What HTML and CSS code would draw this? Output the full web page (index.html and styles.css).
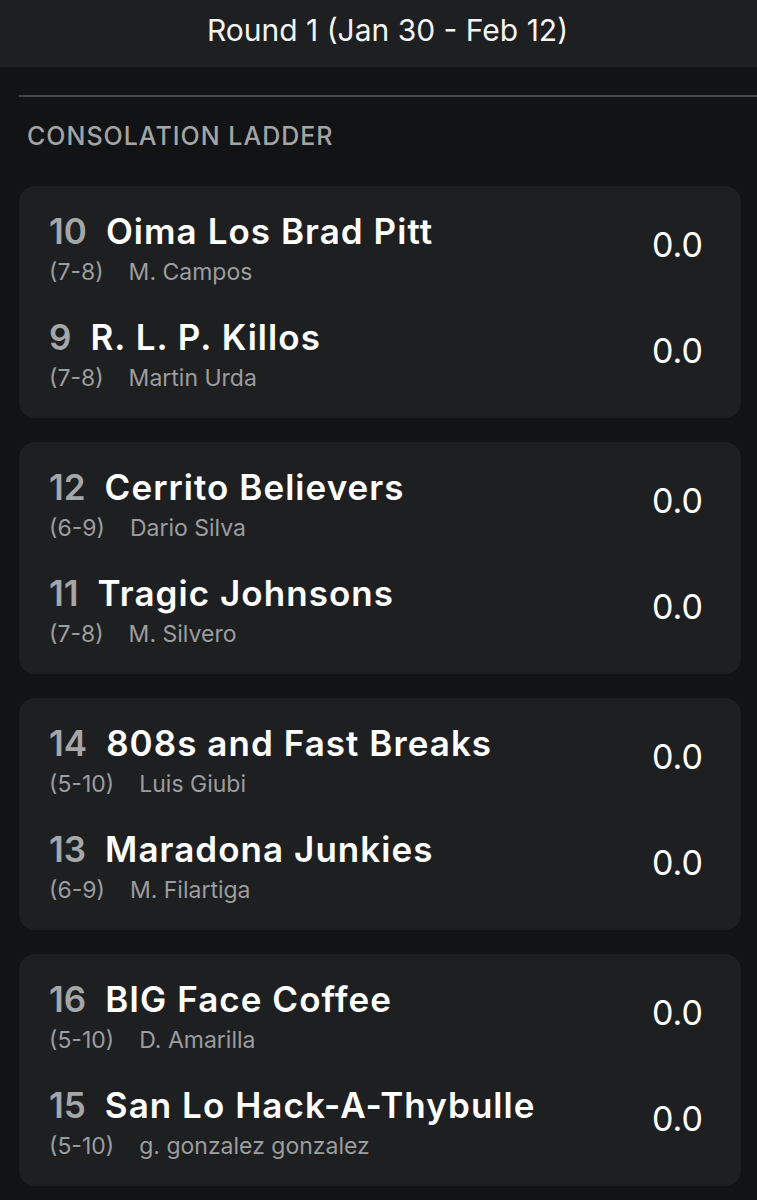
FILE: index.html
```html
<!DOCTYPE html>
<html lang="en">
<head>
  <meta charset="UTF-8" />
  <title>Round 1 - Consolation Ladder</title>
  <link rel="stylesheet" href="styles.css">
</head>
<body>
  <header class="topbar">
    <h1>Round 1 (Jan 30 - Feb 12)</h1>
  </header>

  <main class="content">
    <hr class="divider" />
    <h2 class="section-title">CONSOLATION LADDER</h2>

    <div class="matchup">
      <div class="team">
        <div class="team-info">
          <div class="team-name"><span class="seed">10</span>Oima Los Brad Pitt</div>
          <div class="team-meta"><span class="record">(7-8)</span>M. Campos</div>
        </div>
        <div class="score">0.0</div>
      </div>
      <div class="team">
        <div class="team-info">
          <div class="team-name"><span class="seed">9</span>R. L. P. Killos</div>
          <div class="team-meta"><span class="record">(7-8)</span>Martin Urda</div>
        </div>
        <div class="score">0.0</div>
      </div>
    </div>

    <div class="matchup">
      <div class="team">
        <div class="team-info">
          <div class="team-name"><span class="seed">12</span>Cerrito Believers</div>
          <div class="team-meta"><span class="record">(6-9)</span>Dario Silva</div>
        </div>
        <div class="score">0.0</div>
      </div>
      <div class="team">
        <div class="team-info">
          <div class="team-name"><span class="seed">11</span>Tragic Johnsons</div>
          <div class="team-meta"><span class="record">(7-8)</span>M. Silvero</div>
        </div>
        <div class="score">0.0</div>
      </div>
    </div>

    <div class="matchup">
      <div class="team">
        <div class="team-info">
          <div class="team-name"><span class="seed">14</span>808s and Fast Breaks</div>
          <div class="team-meta"><span class="record">(5-10)</span>Luis Giubi</div>
        </div>
        <div class="score">0.0</div>
      </div>
      <div class="team">
        <div class="team-info">
          <div class="team-name"><span class="seed">13</span>Maradona Junkies</div>
          <div class="team-meta"><span class="record">(6-9)</span>M. Filartiga</div>
        </div>
        <div class="score">0.0</div>
      </div>
    </div>

    <div class="matchup">
      <div class="team">
        <div class="team-info">
          <div class="team-name"><span class="seed">16</span>BIG Face Coffee</div>
          <div class="team-meta"><span class="record">(5-10)</span>D. Amarilla</div>
        </div>
        <div class="score">0.0</div>
      </div>
      <div class="team">
        <div class="team-info">
          <div class="team-name"><span class="seed">15</span>San Lo Hack-A-Thybulle</div>
          <div class="team-meta"><span class="record">(5-10)</span>g. gonzalez gonzalez</div>
        </div>
        <div class="score">0.0</div>
      </div>
    </div>
  </main>
</body>
</html>
```

FILE: styles.css
```css
*, *::before, *::after {
  box-sizing: border-box;
}
body {
  margin: 0;
  font-family: Inter, Roboto, 'Liberation Sans', sans-serif;
  background: #121315;
  color: #fff;
  overflow: hidden;
}


.topbar {
  height: 67px;
  padding-left: 18px;
  background: #1e1f21;
  display: flex;
  align-items: center;
  justify-content: center;
}
.topbar h1 {
  margin: 0 0 8px;
  font-size: 30px;
  font-weight: 400;
  color: #f4f4f4;
}


.content {
  padding: 28px 16px 0 19px;
  margin-right: -16px;
}
.divider {
  margin: 0;
  border: none;
  height: 2px;
  background: #46474a;
}
.section-title {
  margin: 24px 0 35px 8px;
  font-size: 25px;
  font-weight: 500;
  color: #a3a4a6;
  letter-spacing: 0.04em;
  line-height: 30px;
}


.matchup {
  width: 722px;
  background: #1e1f21;
  border-radius: 16px;
  padding: 25px 38px 27px 30px;
  margin-bottom: 24px;
  display: flex;
  flex-direction: column;
  gap: 32px;
}
.team {
  display: flex;
  align-items: center;
  justify-content: space-between;
}
.team-name {
  font-size: 35px;
  line-height: 40px;
  font-weight: 600;
  letter-spacing: 0.03em;
  color: #fff;
}
.seed {
  color: #a5a6a8;
  letter-spacing: 0;
  margin-right: 19px;
}
.team-meta {
  margin-top: 8px;
  font-size: 23px;
  line-height: 26px;
  color: #9c9d9f;
}
.record {
  margin-right: 25px;
}
.score {
  font-size: 34px;
  font-weight: 400;
  padding-bottom: 8px;
}
```
